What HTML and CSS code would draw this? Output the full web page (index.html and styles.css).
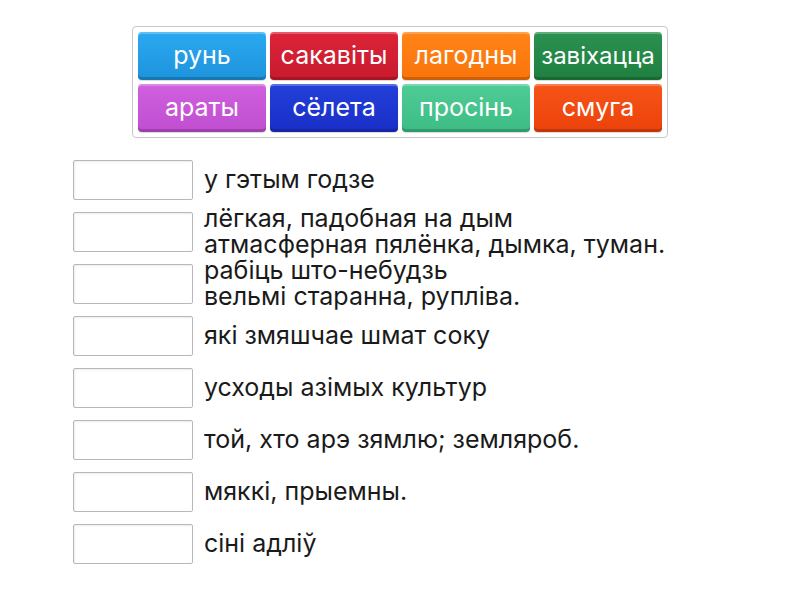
FILE: index.html
```html
<!DOCTYPE html>
<html lang="be">
<head>
<meta charset="utf-8">
<link rel="stylesheet" href="styles.css">
</head>
<body>
<div class="page">
  <div class="bank">
    <div class="tile c-blue">рунь</div>
    <div class="tile c-red">сакавіты</div>
    <div class="tile c-orange">лагодны</div>
    <div class="tile c-green fit">завіхацца</div>
    <div class="tile c-purple">араты</div>
    <div class="tile c-navy">сёлета</div>
    <div class="tile c-teal">просінь</div>
    <div class="tile c-vermil">смуга</div>
  </div>
  <div class="rows">
    <div class="row"><div class="slot"></div><div class="clue">у гэтым годзе</div></div>
    <div class="row"><div class="slot"></div><div class="clue">лёгкая, падобная на дым<br>атмасферная пялёнка, дымка, туман.</div></div>
    <div class="row"><div class="slot"></div><div class="clue">рабіць што-небудзь<br>вельмі старанна, рупліва.</div></div>
    <div class="row"><div class="slot"></div><div class="clue">які змяшчае шмат соку</div></div>
    <div class="row"><div class="slot"></div><div class="clue">усходы азімых культур</div></div>
    <div class="row"><div class="slot"></div><div class="clue">той, хто арэ зямлю; земляроб.</div></div>
    <div class="row"><div class="slot"></div><div class="clue">мяккі, прыемны.</div></div>
    <div class="row"><div class="slot"></div><div class="clue">сіні адліў</div></div>
  </div>
</div>
</body>
</html>
```
FILE: styles.css
```css
html, body {
  margin: 0;
  padding: 0;
  background: #ffffff;
}
body {
  font-family: Inter, "Noto Sans", sans-serif;
  color: #1a1a1a;
}
.page {
  width: 800px;
  height: 600px;
  padding-top: 26px;
  box-sizing: border-box;
}
.bank {
  width: 536px;
  box-sizing: border-box;
  margin-left: 132px;
  padding: 5px;
  border: 1px solid #c8c8c8;
  border-radius: 4px;
  display: grid;
  grid-template-columns: repeat(4, 128px);
  grid-auto-rows: 48px;
  gap: 4px;
}
.tile {
  border-radius: 4px;
  color: #fff;
  font-size: 25px;
  display: flex;
  align-items: center;
  justify-content: center;
  padding-bottom: 2px;
  box-sizing: border-box;
  box-shadow: inset 0 2px 0 rgba(255,255,255,0.25), inset 0 -3px 0 rgba(0,0,0,0.18), 0 1px 1px rgba(0,0,0,0.15);
}
.tile.fit { font-size: 24px; }
.c-blue { background: linear-gradient(#2aa9f0, #1e93dc); }
.c-red { background: linear-gradient(#dc2438, #c81a2e); }
.c-orange { background: linear-gradient(#ff8418, #fa740a); }
.c-green { background: linear-gradient(#2a9150, #1f8040); }
.c-purple { background: linear-gradient(#d060e0, #c04ed0); }
.c-navy { background: linear-gradient(#2240d8, #1a2ec8); }
.c-teal { background: linear-gradient(#50cc96, #3cbc84); }
.c-vermil { background: linear-gradient(#f65418, #ec420a); }
.rows {
  margin-top: 22px;
  margin-left: 73px;
  display: flex;
  flex-direction: column;
  gap: 12px;
}
.row {
  display: flex;
  align-items: center;
  height: 40px;
  gap: 11px;
}
.slot {
  width: 120px;
  height: 40px;
  box-sizing: border-box;
  border: 1px solid #b8b8b8;
  border-radius: 2px;
  box-shadow: inset 1px 1px 2px rgba(0,0,0,0.08);
  flex: none;
}
.clue {
  font-size: 25px;
  line-height: 26px;
  white-space: nowrap;
  padding-bottom: 3px;
}
```
